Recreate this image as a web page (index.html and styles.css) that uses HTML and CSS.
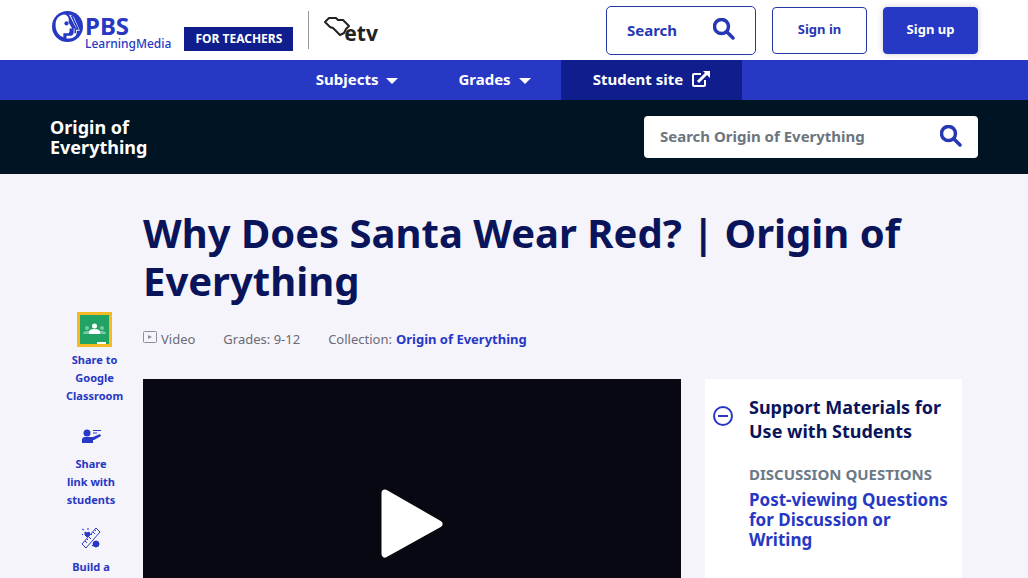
FILE: index.html
```html
<!DOCTYPE html>
<html lang="en">
<head>
  <meta charset="UTF-8">
  <meta name="viewport" content="width=device-width, initial-scale=1.0">
  <title>Why Does Santa Wear Red? | Origin of Everything</title>
  <link rel="stylesheet" href="styles.css">
</head>
<body>
  <header class="site-header">
    <a class="brand" href="#">
      <svg class="brand-mark" viewBox="0 0 60 60" aria-hidden="true">
        <circle cx="30" cy="30" r="30" fill="#2638c4"/>
        <path d="M24 7 C14 8 8 15 7 24 C6 33 9 42 16 48 L22 51 V43 H30 C33 43 34 41 34 38 V34 H39 L32 22 C34 15 31 8 24 7 Z" fill="#fff"/>
        <path d="M33 7 L47 34 H42 V41 C42 46 39 48 34 48 H28 V53 H34 C38 53 40 52 42 51 C46 49 48 45 48 40 V38 H54 L43 13 C40 9 37 8 33 7 Z" fill="#fff"/>
        <path d="M38 9 L50 35 H45 V43" fill="none" stroke="#2638c4" stroke-width="3"/>
        <circle cx="28" cy="24" r="4" fill="#2638c4"/>
      </svg>
      <span class="brand-text">
        <span class="brand-name">PBS</span>
        <span class="brand-sub">LearningMedia</span>
      </span>
    </a>
    <span class="teachers-tag">FOR TEACHERS</span>
    <a class="station" href="#" aria-label="etv">
      <svg class="station-map" viewBox="0 0 26 20" aria-hidden="true">
        <path d="M16 18 L9 11 L6 10 L1 5 L5 1 L12 1 L14 3 L19 3 L25 9 L22 12 L20 16 Z" fill="none" stroke="#222" stroke-width="2" stroke-linejoin="round"/>
      </svg>
      <span class="station-name">etv</span>
    </a>
    <div class="header-actions">
      <button class="search-btn" type="button">
        Search
        <svg class="icon-search" viewBox="0 0 22 22" aria-hidden="true"><circle cx="8.500" cy="8.500" r="7"/><path d="M14 14 L20 20"/></svg>
      </button>
      <button class="btn" type="button">Sign in</button>
      <button class="btn btn-primary" type="button">Sign up</button>
    </div>
  </header>

  <nav class="main-nav">
    <button class="nav-item" type="button">Subjects <span class="caret"></span></button>
    <button class="nav-item" type="button">Grades <span class="caret"></span></button>
    <a class="nav-item nav-student" href="#">Student site
      <svg class="icon-external" viewBox="0 0 18 16" aria-hidden="true">
        <path d="M9 3 H2 Q1 3 1 4 V14 Q1 15 2 15 H12 Q13 15 13 14 V9" fill="none" stroke="#fff" stroke-width="2"/>
        <path d="M6 11 L15 2" stroke="#fff" stroke-width="3"/>
        <path d="M11 0 H18 V7 Z" fill="#fff"/>
      </svg>
    </a>
  </nav>

  <div class="collection-bar">
    <a class="collection-name" href="#">Origin of Everything</a>
    <form class="collection-search">
      <input type="search" placeholder="Search Origin of Everything" aria-label="Search Origin of Everything">
      <button class="collection-submit" type="submit" aria-label="Search">
        <svg class="icon-search" viewBox="0 0 22 22" aria-hidden="true"><circle cx="8.500" cy="8.500" r="7"/><path d="M14 14 L20 20"/></svg>
      </button>
    </form>
  </div>

  <main class="page">
    <aside class="share">
      <a class="share-item" href="#">
        <svg class="icon-classroom" viewBox="0 0 35 35" aria-hidden="true">
          <path d="M0 0 H35 V35 H0 Z" fill="#f6bb24"/>
          <path d="M3 3 H32 V32 H3 Z" fill="#22a366"/>
          <g fill="#7bc8a4"><circle cx="10" cy="16" r="2"/><circle cx="25" cy="16" r="2"/><path d="M6 22 Q6 19 10 19 H25 Q29 19 29 22 Z"/></g>
          <circle cx="17.500" cy="14" r="2.500" fill="#fff"/>
          <path d="M12 22 V20 Q12 17 17.500 17 Q23 17 23 20 V22 Z" fill="#fff"/>
          <path d="M20 30 H29 V32 H20 Z" fill="#fff"/>
        </svg>
        Share to Google Classroom
      </a>
      <a class="share-item" href="#">
        <svg class="icon-link" viewBox="0 0 19 14" aria-hidden="true">
          <g fill="#2638c4"><circle cx="5" cy="4" r="3.500"/><path d="M0 14 V11 Q0 8 3 8 H9 L11 8 L18 5 L19 7 L12 11 L11 11 V14 Z"/></g>
          <path d="M11 1.500 H19 M11 4 H15" stroke="#2638c4"/>
        </svg>
        Share link with students
      </a>
      <a class="share-item" href="#">
        <svg class="icon-build" viewBox="0 0 20 22" aria-hidden="true">
          <g stroke="#2638c4" fill="#2638c4">
            <path d="M4 5 L6 6 L8 5 L9 8 L6 10 L4 8 Z" />
            <circle cx="15" cy="17" r="3"/>
            <path d="M1 2 L3 3 M7 1 L7 3 M1 8 L2 7 M11 19 L12 18" fill="none"/>
            <path d="M1 17 L15 1 L19 5 L5 21 Z" fill="#f5f4fa"/>
            <path d="M4 14 L6 16 M6 12 L7 13 M8 10 L10 12 M10 7 L11 8 M12 5 L14 7 M14 3 L15 4" fill="none"/>
          </g>
        </svg>
        Build a lesson
      </a>
    </aside>

    <article class="resource">
      <h1>Why Does Santa Wear Red? | Origin of Everything</h1>
      <ul class="meta">
        <li>
          <svg class="icon-video" viewBox="0 0 14 12" aria-hidden="true"><rect x=".5" y=".5" width="13" height="11" rx="1" fill="none" stroke="#8c8d98"/><path d="M5 4 L9 6 L5 8 Z" fill="#8c8d98"/></svg>
          Video
        </li>
        <li>Grades: 9-12</li>
        <li>Collection: <a href="#">Origin of Everything</a></li>
      </ul>
      <div class="resource-body">
        <div class="player">
          <button class="play" type="button" aria-label="Play video">
            <svg viewBox="0 0 62 70" aria-hidden="true"><path d="M4 4 L58 35 L4 65 Z" fill="#fff" stroke="#fff" stroke-width="7" stroke-linejoin="round"/></svg>
          </button>
        </div>
        <section class="support">
          <button class="toggle" type="button" aria-label="Collapse support materials">
            <svg viewBox="0 0 20 20" aria-hidden="true"><circle cx="10" cy="10" r="9"/><path d="M5 10 H15"/></svg>
          </button>
          <div class="support-content">
            <h2>Support Materials for Use with Students</h2>
            <h3>DISCUSSION QUESTIONS</h3>
            <a href="#">Post-viewing Questions for Discussion or Writing</a>
          </div>
        </section>
      </div>
    </article>
  </main>
</body>
</html>
```
FILE: styles.css
```css
* {
  box-sizing: border-box;
}

body {
  margin: 0;
  background: #f5f4fa;
  font-family: "Noto Sans", "Open Sans", sans-serif;
  font-size: 13px;
  color: #0a145a;
}

a {
  color: #2638c4;
  text-decoration: none;
}

button {
  font-family: inherit;
  cursor: pointer;
}

svg {
  display: block;
  flex: none;
}

.site-header {
  display: flex;
  align-items: center;
  height: 60px;
  padding: 0 50px;
  background: #fff;
}

.brand {
  display: flex;
  align-items: flex-start;
  height: 40px;
  padding-left: 2px;
}

.brand-mark {
  width: 31px;
  height: 31px;
  margin-top: 1px;
}

.brand-text {
  display: flex;
  flex-direction: column;
  padding: 4px 0 0 2px;
}

.brand-name {
  font-size: 24px;
  font-weight: 700;
  line-height: 24px;
}

.brand-sub {
  font-size: 12px;
  font-weight: 500;
  line-height: 12px;
}

.teachers-tag {
  margin: 18px 15px 0 13px;
  padding: 0 11px;
  background: #0f1e8c;
  color: #fff;
  font-size: 12px;
  font-weight: 700;
  line-height: 24px;
}

.station {
  display: flex;
  align-items: flex-start;
  height: 38px;
  padding-left: 15px;
  border-left: 1px solid #999;
}

.station-map {
  width: 26px;
  height: 20px;
  margin-top: 6px;
}

.station-name {
  margin: 9px 0 0 -6px;
  color: #222;
  font-size: 21px;
  font-weight: 700;
  line-height: 26px;
}

.header-actions {
  display: flex;
  align-items: center;
  gap: 16px;
  margin-left: auto;
}

.search-btn {
  display: flex;
  align-items: center;
  justify-content: space-between;
  width: 150px;
  height: 49px;
  padding: 0 20px;
  background: #fff;
  border: 1px solid #2638a8;
  border-radius: 5px;
  color: #2638b4;
  font-size: 15px;
  font-weight: 700;
}

.icon-search {
  width: 22px;
  height: 22px;
  margin-bottom: 3px;
  fill: none;
  stroke: #2638b4;
  stroke-width: 3.5;
  stroke-linecap: round;
}

.btn {
  width: 95px;
  height: 47px;
  padding: 0 16px 2px;
  background: #fff;
  border: 1px solid #2638a8;
  border-radius: 4px;
  color: #2638b4;
  font-size: 13px;
  font-weight: 700;
}

.btn-primary {
  background: #2638c4;
  border-color: #2638c4;
  color: #fff;
  box-shadow: 0 0 6px rgba(0, 0, 0, 0.2);
}

.main-nav {
  display: flex;
  justify-content: center;
  height: 40px;
  background: #2638c4;
}

.nav-item {
  display: flex;
  align-items: center;
  gap: 8px;
  padding: 0 30px 2px;
  background: none;
  border: 0;
  color: #fff;
  font-size: 15px;
  font-weight: 700;
}

.nav-student {
  gap: 9px;
  padding: 0 32px 2px;
  background: #0f1e8c;
}

.caret {
  margin-top: 4px;
  border: 6px solid transparent;
  border-top-color: #fff;
  border-bottom: 0;
}

.icon-external {
  width: 18px;
  height: 16px;
}

.collection-bar {
  display: flex;
  align-items: center;
  justify-content: space-between;
  padding: 16px 50px;
  background: #001423;
}

.collection-name {
  width: 130px;
  color: #fff;
  font-size: 18px;
  font-weight: 700;
  line-height: 20px;
}

.collection-search {
  display: flex;
  width: 36%;
  height: 42px;
  background: #fff;
  border-radius: 4px;
}

.collection-search input {
  flex: 1;
  min-width: 0;
  padding: 0 16px 2px;
  background: none;
  border: 0;
  font-family: inherit;
  font-size: 15px;
  font-weight: 700;
}

.collection-search input::placeholder {
  color: #6c757d;
}

.collection-submit {
  padding: 0 16px;
  background: none;
  border: 0;
}

.page {
  display: flex;
  padding: 35px 66px;
}

.share {
  display: flex;
  flex-direction: column;
  align-items: flex-start;
  gap: 18px;
  width: 77px;
  padding-top: 103px;
}

.share-item {
  display: flex;
  flex-direction: column;
  align-items: center;
  width: min-content;
  min-width: 50px;
  font-size: 11px;
  font-weight: 700;
  line-height: 18px;
  text-align: center;
}

.icon-classroom {
  width: 35px;
  height: 35px;
  margin-bottom: 4px;
}

.icon-link {
  width: 19px;
  height: 14px;
  margin: 6px 0 12px;
}

.icon-build {
  width: 20px;
  height: 22px;
  margin-bottom: 9px;
}

.resource {
  flex: 1;
  min-width: 0;
}

h1 {
  margin: 0;
  font-size: 40px;
  font-weight: 700;
  line-height: 48px;
}

.meta {
  display: flex;
  gap: 28px;
  margin: 24px 0 30px;
  padding: 0;
  list-style: none;
  color: #6a6b76;
  line-height: 20px;
}

.meta li {
  display: flex;
  gap: 4px;
}

.meta a {
  font-weight: 700;
}

.icon-video {
  width: 14px;
  height: 12px;
  margin-top: 2px;
}

.resource-body {
  display: flex;
  align-items: flex-start;
  gap: 24px;
}

.player {
  display: flex;
  align-items: center;
  justify-content: center;
  flex: 1;
  aspect-ratio: 16 / 9;
  background: #080812;
}

.play {
  width: 62px;
  height: 70px;
  margin-bottom: 12px;
  padding: 0;
  background: none;
  border: 0;
}

.support {
  display: flex;
  align-items: flex-start;
  gap: 16px;
  width: 257px;
  padding: 16px 8px 32px;
  background: #fff;
}

.toggle {
  width: 20px;
  height: 20px;
  margin-top: 11px;
  padding: 0;
  background: none;
  border: 0;
}

.toggle svg {
  fill: none;
  stroke: #2638c4;
  stroke-width: 2;
}

.support-content {
  flex: 1;
}

h2 {
  margin: 0 0 21px;
  font-size: 18px;
  line-height: 24px;
}

h3 {
  margin: 0 0 6px;
  color: #6c7a87;
  font-size: 15px;
  line-height: 20px;
}

.support-content a {
  display: block;
  font-size: 17px;
  font-weight: 700;
  line-height: 20px;
}
```
